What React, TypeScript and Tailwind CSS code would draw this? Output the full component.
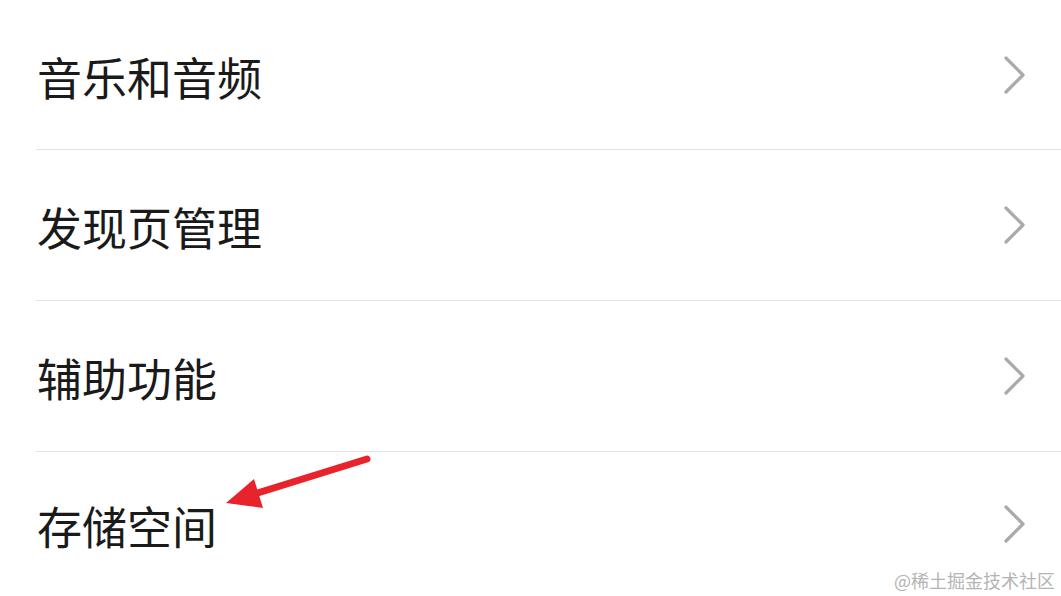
import React from "react";

const items = [
  { label: "音乐和音频", h: "h-[150px]" },
  { label: "发现页管理", h: "h-[151px]" },
  { label: "辅助功能", h: "h-[151px]" },
  { label: "存储空间", h: "h-[144px]" },
];

function Chevron() {
  return (
    <svg width="24" height="40" viewBox="0 0 24 40" className="shrink-0">
      <polyline
        points="4,3 21,20 4,37"
        fill="none"
        stroke="#aaaaaa"
        strokeWidth="3.2"
        strokeLinecap="round"
        strokeLinejoin="round"
      />
    </svg>
  );
}

export default function App() {
  return (
    <div
      className="relative w-[1061px] h-[596px] bg-white overflow-hidden"
      style={{ fontFamily: '"Noto Sans CJK SC", "Noto Sans", sans-serif' }}
    >
      <div className="flex flex-col pl-[36px]">
        {items.map((item, i) => (
          <div
            key={item.label}
            className={`${item.h} flex items-center justify-between pr-[35px] ${
              i < items.length - 1 ? "border-b border-[#e3e3e3]" : ""
            }`}
          >
            <span className="text-[45px] leading-none text-[#1a1a1a] pl-[1px] pt-[3px]">
              {item.label}
            </span>
            <Chevron />
          </div>
        ))}
      </div>

      {/* red annotation arrow */}
      <svg
        className="absolute left-0 top-0 pointer-events-none"
        width="1061"
        height="596"
      >
        <line
          x1="367"
          y1="459"
          x2="248"
          y2="496"
          stroke="#e8232b"
          strokeWidth="7"
          strokeLinecap="round"
        />
        <polygon points="226,503 254,479 263,508" fill="#e8232b" />
      </svg>

      <span className="absolute right-[6px] bottom-[7px] text-[18px] leading-none text-[#b4b4b4]">
        @稀土掘金技术社区
      </span>
    </div>
  );
}
